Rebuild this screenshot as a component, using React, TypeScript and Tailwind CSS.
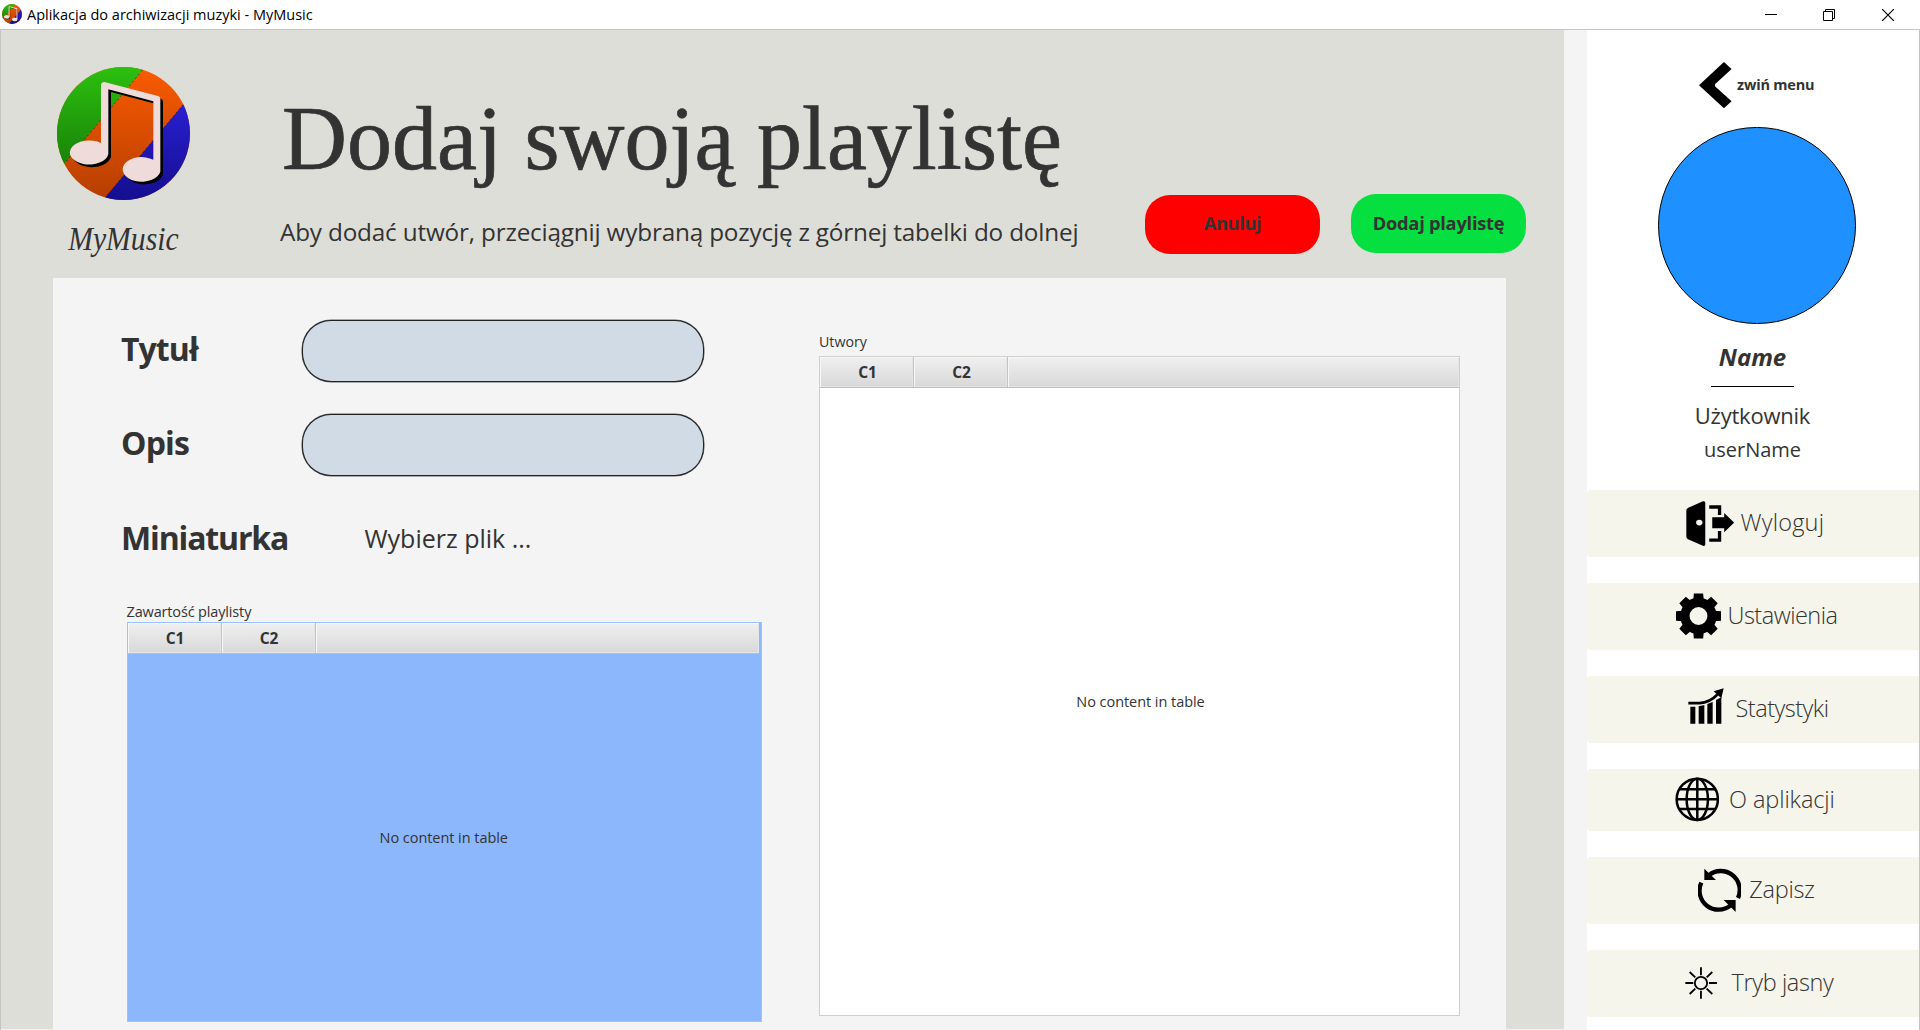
import React from 'react';

function Logo({ className }: { className: string }) {
  const note =
    'M303 254 Q304 246 313 246 L474 288 Q481 290 481 297 V515 A57 37 0 1 1 460 479 V304 L325 268 V462 A58 36 0 1 1 303 429 Z';
  return (
    <svg viewBox="171 201 399 399" className={className}>
      <defs>
        <clipPath id="disc">
          <circle cx="370.5" cy="400.5" r="199.5" />
        </clipPath>
        <linearGradient id="green" x1="0" y1="0" x2="0" y2="1">
          <stop offset="0" stopColor="#2cc00f" />
          <stop offset="1" stopColor="#187d08" />
        </linearGradient>
        <linearGradient id="orange" x1="0" y1="0" x2="0" y2="1">
          <stop offset="0" stopColor="#fb5b00" />
          <stop offset="1" stopColor="#b53e00" />
        </linearGradient>
        <linearGradient id="blue" x1="0" y1="0" x2="0" y2="1">
          <stop offset="0" stopColor="#2b20d6" />
          <stop offset="1" stopColor="#150e90" />
        </linearGradient>
      </defs>
      <g clipPath="url(#disc)">
        <rect x="171" y="201" width="399" height="399" fill="url(#orange)" />
        <path d="M171 201 H435 L427 211 L194 490 L171 518 Z" fill="url(#green)" />
        <path d="M570 289 L549 314 L316 592 L309 600 H570 Z" fill="url(#blue)" />
        <path d="M427 211 L194 490 M549 314 L316 592" stroke="#222" strokeWidth="2" strokeDasharray="5 9" />
      </g>
      <path d={note} fill="#000" transform="translate(8 8)" />
      <path d={note} fill="#efdcda" />
    </svg>
  );
}

function LogoutIcon() {
  return (
    <svg viewBox="317 512 146 137" className="h-[45.5px] w-[48.5px]">
      <path d="M318 541 Q318 534 324 532 L368 513 Q375 511 375 518 V642 Q375 649 368 647 L323 627 Q318 625 318 619 Z" />
      <ellipse cx="357" cy="577" rx="9.5" ry="8.5" fill="#f5f5eb" />
      <path d="M387 530 H418 V554 M387 630 H418 V602" fill="none" stroke="#000" strokeWidth="10" />
      <path d="M396 561 H432 V548 L462 577 L432 606 V594 H396 Z" />
    </svg>
  );
}

function GearIcon() {
  return (
    <svg viewBox="-71 -69 142 138" className="h-[46px] w-[47px]">
      <circle r="41" fill="none" stroke="#000" strokeWidth="28" />
      {[0, 45, 90, 135, 180, 225, 270, 315].map((a) => (
        <path key={a} d="M-16 -46 L-14 -68 H14 L16 -46 Z" transform={`rotate(${a})`} />
      ))}
    </svg>
  );
}

function StatsIcon() {
  return (
    <svg viewBox="323 52 108 108" className="mb-[7px] h-[36px] w-[36px]">
      <path d="M330 108 H345 V159 H330 Z M355 107 L372 103 V159 H355 Z M381 100 L397 94 V159 H381 Z M407 88 L423 80 V159 H407 Z" />
      <path d="M324 97.5 H358 Q388 96 413 70" fill="none" stroke="#000" strokeWidth="8" />
      <path d="M430 53 L400 62 L423 83 Z" />
    </svg>
  );
}

function GlobeIcon() {
  return (
    <svg viewBox="284 320 134 134" className="h-[44.6px] w-[44.6px]" fill="none" stroke="#000" strokeWidth="7.5">
      <circle cx="351" cy="387" r="62" />
      <ellipse cx="351" cy="387" rx="32" ry="62" />
      <path d="M351 324 V450 M288 387 H414 M297 357 H405 M297 416 H405" />
    </svg>
  );
}

function SyncIcon() {
  return (
    <svg viewBox="352 594 130 132" className="h-[44px] w-[43.3px]">
      <path
        d="M384 616 A57 57 0 0 1 472 684 M362 638 A57 57 0 0 0 450 706"
        fill="none"
        stroke="#000"
        strokeWidth="13"
      />
      <path d="M371 596 V630 H406 Z M465 726 V690 H429 Z" />
    </svg>
  );
}

function SunIcon() {
  return (
    <svg viewBox="314 892 98 96" className="h-[32px] w-[32.6px]" fill="none" stroke="#000" strokeWidth="5.5">
      <circle cx="362" cy="940" r="18.5" />
      <path d="M362 893 V917 M362 963 V987 M315 940 H339 M386 940 H410 M328 907 L345 923 M396 907 L379 923 M328 973 L345 957 M396 973 L379 957" />
    </svg>
  );
}

const menu = [
  { label: 'Wyloguj', icon: <LogoutIcon />, box: 'h-[66.5px] pl-[98.5px]', text: 'pl-[6.5px] tracking-[0.2px]', gap: '' },
  { label: 'Ustawienia', icon: <GearIcon />, box: 'h-[66.5px] pl-[87.5px]', text: 'pl-[6px] tracking-[-0.5px]', gap: 'mt-[26.5px]' },
  { label: 'Statystyki', icon: <StatsIcon />, box: 'h-[66.5px] pl-[100.5px]', text: 'pl-[12px] tracking-[-0.5px]', gap: 'mt-[26.5px]' },
  { label: 'O aplikacji', icon: <GlobeIcon />, box: 'h-[61.5px] pl-[87.5px]', text: 'pl-[10px] tracking-[-0.1px]', gap: 'mt-[26.5px]' },
  { label: 'Zapisz', icon: <SyncIcon />, box: 'h-[66.5px] pl-[110.5px]', text: 'pl-[8.5px] tracking-[-0.28px]', gap: 'mt-[26.5px]' },
  { label: 'Tryb jasny', icon: <SunIcon />, box: 'h-[66.5px] pl-[97.5px]', text: 'pl-[14.5px] tracking-[-0.4px]', gap: 'mt-[26.5px]' },
];

function HeaderRow() {
  const cell =
    'border-r border-r-[#c4c4c4] shadow-[inset_1px_1px_0_#f7f7f7,inset_-1px_-1px_0_#e4e4e4] flex items-center justify-center pl-[2px] pt-px';
  return (
    <div className="flex h-[31px] shrink-0 border-b border-b-[#bdbdbd] bg-linear-to-b from-[#f0f0f0] to-[#d8d8d8] text-[15.5px] font-bold">
      <div className={`${cell} w-[94px]`}>C1</div>
      <div className={`${cell} w-[94px]`}>C2</div>
      <div className="flex-1 shadow-[inset_1px_1px_0_#f7f7f7,inset_-1px_-1px_0_#e4e4e4]" />
    </div>
  );
}

function TitleBar() {
  return (
    <div className="flex h-[29px] shrink-0 items-center bg-white pl-[2px] text-black">
      <Logo className="mb-px h-5 w-5" />
      <span className="ml-[5px] flex-1 text-[14.5px] leading-5">Aplikacja do archiwizacji muzyki - MyMusic</span>
      <svg className="mr-[46px] h-3 w-3" viewBox="0 0 12 12" stroke="#000" fill="none">
        <path d="M0 5.5 H12" />
      </svg>
      <svg className="mr-[47px] h-3 w-3" viewBox="0 0 12 12" stroke="#000" fill="none">
        <path d="M0.5 2.5 H9.5 V11.5 H0.5 Z M2.5 2.5 V0.5 H11.5 V9.5 H9.5" />
      </svg>
      <svg className="mr-[26px] h-3 w-3" viewBox="0 0 12 12" stroke="#000" strokeWidth="1.2" fill="none">
        <path d="M0 0 L12 12 M12 0 L0 12" />
      </svg>
    </div>
  );
}

function Header() {
  return (
    <header className="flex h-[248px] shrink-0 pl-[56px]">
      <div className="flex w-[133px] flex-col items-center pt-[37px]">
        <Logo className="h-[133px] w-[133px] shrink-0" />
        <span className="mt-[19px] scale-x-[0.9] font-['Liberation_Serif',serif] text-[33px] leading-10 italic">
          MyMusic
        </span>
      </div>
      <div className="ml-[90px] w-[864.5px] whitespace-nowrap">
        <h1 className="mt-[59px] pl-[2px] font-['Liberation_Serif',serif] text-[90px] leading-[100px] [-webkit-text-stroke:0.7px_#333]">
          Dodaj swoją playlistę
        </h1>
        <p className="mt-[27px] text-[24.3px] leading-[32px] tracking-[-0.18px]">
          Aby dodać utwór, przeciągnij wybraną pozycję z górnej tabelki do dolnej
        </p>
      </div>
      <div className="flex items-start gap-[31px] pt-[164px] text-[18.3px] font-bold whitespace-nowrap">
        <button className="mt-px h-[58.7px] w-[175px] rounded-[25px] bg-[#ff0000] pb-[3px] pl-px tracking-[-0.4px]">Anuluj</button>
        <button className="h-[58.7px] w-[175px] rounded-[25px] bg-[#05df3f] pb-px pl-px tracking-[-0.25px]">
          Dodaj playlistę
        </button>
      </div>
    </header>
  );
}

function Content() {
  const field = 'h-[62px] w-[402.5px] rounded-[29px] border-[1.5px] border-black/85 bg-[#d1dbe5] outline-none ring-[0.5px] ring-black/60';
  return (
    <section className="ml-[52px] flex w-[1453px] flex-1 bg-[#f4f4f4]">
      <div className="w-[709px] pl-[68px]">
        <div className="mt-[41.5px] flex items-center">
          <label className="w-[180.5px] pb-[3px] text-[32px] leading-[40px] font-bold tracking-[-0.93px]">Tytuł</label>
          <input className={field} />
        </div>
        <div className="mt-[32px] flex items-center">
          <label className="w-[180.5px] pb-[3px] text-[32px] leading-[40px] font-bold tracking-[-0.8px]">Opis</label>
          <input className={field} />
        </div>
        <div className="mt-[42.5px] flex h-[40px] items-center">
          <span className="w-[243.5px] text-[32px] leading-[40px] font-bold tracking-[-1.15px]">Miniaturka</span>
          <span className="text-[25px] leading-[36px]">Wybierz plik ...</span>
        </div>
        <div className="ml-[5.5px] mt-[44px] text-[14.5px] leading-[20px] tracking-[-0.15px]">Zawartość playlisty</div>
        <div className="ml-[5.5px] flex h-[400px] w-[635.5px] flex-col border border-[#9cc2fd] bg-[#8db7fd] pr-[2px]">
          <HeaderRow />
          <div className="flex flex-1 items-center justify-center pl-px text-[14.5px] tracking-[-0.05px]">
            No content in table
          </div>
        </div>
      </div>
      <div className="w-[699px] pl-[57px]">
        <div className="mt-[54px] text-[14.2px] leading-[20px]">Utwory</div>
        <div className="mt-[4px] flex h-[659.5px] w-[641px] flex-col border border-[#cfcfcf] bg-white">
          <HeaderRow />
          <div className="flex flex-1 items-center justify-center pt-px pl-[2px] text-[14.5px] tracking-[-0.05px]">
            No content in table
          </div>
        </div>
      </div>
    </section>
  );
}

function Sidebar() {
  return (
    <aside className="flex w-[332px] flex-col bg-white whitespace-nowrap">
      <div className="mt-[31.5px] flex h-[47px] items-center pl-[112px]">
        <svg viewBox="357 185 98 140" className="h-[46.6px] w-[32.6px]">
          <path d="M357 255 L432 185 L455 206 L405 252 V258 L455 303 L432 324 Z" />
        </svg>
        <span className="pb-px pl-[5.5px] text-[14.5px] font-bold tracking-[-0.2px]">zwiń menu</span>
      </div>
      <div className="mt-[18px] ml-[71px] h-[197.5px] w-[197.5px] shrink-0 rounded-full border-[1.2px] border-black bg-[#1e90ff]" />
      <div className="flex flex-col items-center pr-px text-center">
        <div className="mt-[18px] text-[24px] leading-[30px] font-bold italic">Name</div>
        <div className="mt-[14px] h-px w-[83px] bg-black" />
        <div className="mt-[12.5px] text-[22px] leading-[30px] tracking-[-0.23px]">Użytkownik</div>
        <div className="mt-[5.5px] text-[20px] leading-[30px]">userName</div>
      </div>
      <nav className="mt-[25px]">
        {menu.map((m) => (
          <div key={m.label} className={`flex items-center rounded-l-[4px] bg-[#f5f5eb] ${m.box} ${m.gap}`}>
            {m.icon}
            <span className={`pb-[2px] text-[23.5px] leading-8 font-light ${m.text}`}>{m.label}</span>
          </div>
        ))}
      </nav>
    </aside>
  );
}

export default function App() {
  return (
    <div className="flex h-[1030px] w-[1920px] flex-col overflow-hidden bg-white font-['Open_Sans','Noto_Sans',sans-serif] text-[#333]">
      <TitleBar />
      <div className="flex min-h-0 flex-1 border-x border-t border-[#c4c5c3] bg-[#f4f4f4]">
        <main className="mb-px flex w-[1563px] flex-col bg-[#dddeD8]">
          <Header />
          <Content />
        </main>
        <div className="w-[23px]" />
        <Sidebar />
      </div>
    </div>
  );
}
